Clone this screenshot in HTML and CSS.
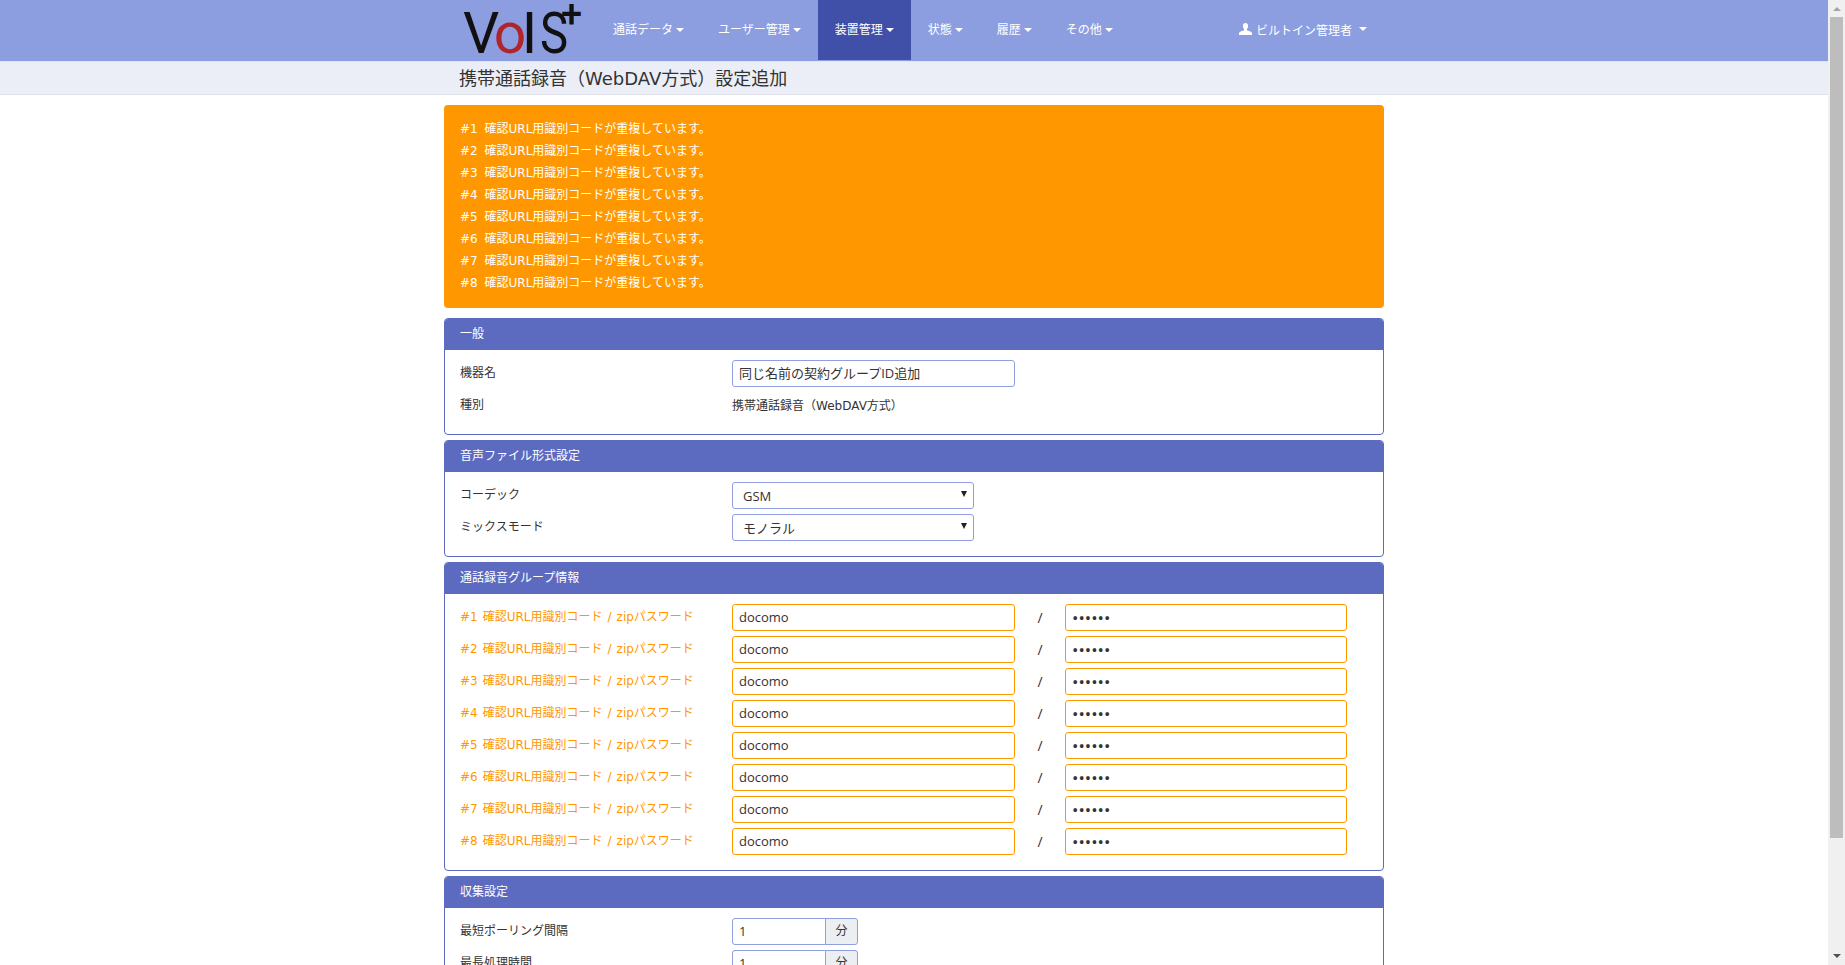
FILE: index.html
```html
<!DOCTYPE html>
<html lang="ja">
<head>
    <meta charset="UTF-8">
    <title>携帯通話録音（WebDAV方式）設定追加</title>
    <link rel="stylesheet" href="styles.css">
</head>
<body>
    <div class="page">
        <nav class="navbar">
            <div class="container nav-inner">
                <a class="logo" href="#"><span class="logo-v">V</span><span class="logo-o">o</span><span class="logo-i">I</span><span class="logo-s">S</span><span class="logo-plus">+</span></a>
                <ul class="nav-menu">
                    <li><a href="#">通話データ<i class="caret"></i></a></li>
                    <li><a href="#">ユーザー管理<i class="caret"></i></a></li>
                    <li class="active"><a href="#">装置管理<i class="caret"></i></a></li>
                    <li><a href="#">状態<i class="caret"></i></a></li>
                    <li><a href="#">履歴<i class="caret"></i></a></li>
                    <li><a href="#">その他<i class="caret"></i></a></li>
                </ul>
                <a class="nav-user" href="#">
                    <svg class="user-icon" viewBox="0 0 13 12"><path d="M6.500 0C4.900 0 3.900 1.200 3.900 3c0 1.200.5 2.300 1.200 3v1.200C3.500 7.800.6 8.500 0 10v2h13v-2c-.6-1.500-3.500-2.200-5.100-2.800V6c.7-.7 1.200-1.800 1.200-3C9.100 1.200 8.100 0 6.500 0z"/></svg>
                    <span>ビルトイン管理者</span><i class="caret caret-user"></i>
                </a>
            </div>
        </nav>
        <div class="subheader">
            <h1 class="container page-title">携帯通話録音（WebDAV方式）設定追加</h1>
        </div>

        <main class="container content">
            <div class="alert">
                <p>#1 確認URL用識別コードが重複しています。</p>
                <p>#2 確認URL用識別コードが重複しています。</p>
                <p>#3 確認URL用識別コードが重複しています。</p>
                <p>#4 確認URL用識別コードが重複しています。</p>
                <p>#5 確認URL用識別コードが重複しています。</p>
                <p>#6 確認URL用識別コードが重複しています。</p>
                <p>#7 確認URL用識別コードが重複しています。</p>
                <p>#8 確認URL用識別コードが重複しています。</p>
            </div>

            <section class="panel">
                <h2 class="panel-heading">一般</h2>
                <div class="panel-body">
                    <div class="form-row">
                        <label>機器名</label>
                        <input class="input input-code" type="text" value="同じ名前の契約グループID追加">
                    </div>
                    <div class="form-row">
                        <label>種別</label>
                        <span class="static-text">携帯通話録音（WebDAV方式）</span>
                    </div>
                </div>
            </section>

            <section class="panel">
                <h2 class="panel-heading">音声ファイル形式設定</h2>
                <div class="panel-body">
                    <div class="form-row">
                        <label>コーデック</label>
                        <div class="select"><span>GSM</span><i class="select-arrow"></i></div>
                    </div>
                    <div class="form-row">
                        <label>ミックスモード</label>
                        <div class="select"><span>モノラル</span><i class="select-arrow"></i></div>
                    </div>
                </div>
            </section>

            <section class="panel">
                <h2 class="panel-heading">通話録音グループ情報</h2>
                <div class="panel-body">
                    <div class="form-row error">
                        <label>#1 確認URL用識別コード / zipパスワード</label>
                        <input class="input input-code" type="text" value="docomo">
                        <span class="slash">/</span>
                        <input class="input input-pass" type="password" value="secret">
                    </div>
                    <div class="form-row error">
                        <label>#2 確認URL用識別コード / zipパスワード</label>
                        <input class="input input-code" type="text" value="docomo">
                        <span class="slash">/</span>
                        <input class="input input-pass" type="password" value="secret">
                    </div>
                    <div class="form-row error">
                        <label>#3 確認URL用識別コード / zipパスワード</label>
                        <input class="input input-code" type="text" value="docomo">
                        <span class="slash">/</span>
                        <input class="input input-pass" type="password" value="secret">
                    </div>
                    <div class="form-row error">
                        <label>#4 確認URL用識別コード / zipパスワード</label>
                        <input class="input input-code" type="text" value="docomo">
                        <span class="slash">/</span>
                        <input class="input input-pass" type="password" value="secret">
                    </div>
                    <div class="form-row error">
                        <label>#5 確認URL用識別コード / zipパスワード</label>
                        <input class="input input-code" type="text" value="docomo">
                        <span class="slash">/</span>
                        <input class="input input-pass" type="password" value="secret">
                    </div>
                    <div class="form-row error">
                        <label>#6 確認URL用識別コード / zipパスワード</label>
                        <input class="input input-code" type="text" value="docomo">
                        <span class="slash">/</span>
                        <input class="input input-pass" type="password" value="secret">
                    </div>
                    <div class="form-row error">
                        <label>#7 確認URL用識別コード / zipパスワード</label>
                        <input class="input input-code" type="text" value="docomo">
                        <span class="slash">/</span>
                        <input class="input input-pass" type="password" value="secret">
                    </div>
                    <div class="form-row error">
                        <label>#8 確認URL用識別コード / zipパスワード</label>
                        <input class="input input-code" type="text" value="docomo">
                        <span class="slash">/</span>
                        <input class="input input-pass" type="password" value="secret">
                    </div>
                </div>
            </section>

            <section class="panel">
                <h2 class="panel-heading">収集設定</h2>
                <div class="panel-body">
                    <div class="form-row">
                        <label>最短ポーリング間隔</label>
                        <div class="input-group"><input class="input" type="text" value="1"><span class="addon">分</span></div>
                    </div>
                    <div class="form-row">
                        <label>最長処理時間</label>
                        <div class="input-group"><input class="input" type="text" value="1"><span class="addon">分</span></div>
                    </div>
                </div>
            </section>
        </main>
    </div>

    <div class="scrollbar">
        <i class="scroll-up"></i>
        <div class="scroll-track"><div class="scroll-thumb"></div></div>
        <i class="scroll-down"></i>
    </div>
</body>
</html>
```

FILE: styles.css
```css
html, body {
    height: 965px;
    margin: 0;
    overflow: hidden;
}
body {
    display: flex;
    font-family: "DejaVu Sans", "Noto Sans CJK JP", sans-serif;
    font-size: 12px;
    color: #333;
    background-color: #fff;
}
.page {
    flex: 1;
    min-width: 0;
    height: 965px;
    overflow: hidden;
}
.container {
    width: 940px;
    margin: 0 auto;
}

/* ナビゲーション */
.navbar {
    height: 61px;
    background-color: #8c9ee0;
    border-bottom: 1px solid #dfe3f2;
}
.nav-inner {
    display: flex;
    height: 60px;
}
.logo {
    width: 152px;
    height: 60px;
    padding-left: 19px;
    box-sizing: border-box;
    position: relative;
    font-family: Roboto, sans-serif;
    font-size: 57px;
    line-height: 67px;
    color: #111;
    text-decoration: none;
    white-space: nowrap;
}
.logo-v {
    letter-spacing: -5.5px;
}
.logo-o {
    color: #b0242b;
    letter-spacing: -4.5px;
}
.logo-i {
    letter-spacing: 3px;
}
.logo-s {
    display: inline-block;
    transform: scaleX(.83);
    transform-origin: left;
}
.logo-plus {
    position: absolute;
    left: 117px;
    top: -5px;
    font-size: 38px;
    font-weight: 500;
    line-height: 38px;
}
.nav-menu {
    list-style: none;
    display: flex;
    margin: 0;
    padding: 0;
}
.nav-menu a {
    display: block;
    height: 60px;
    padding: 0 17px;
    line-height: 61px;
    color: #fff;
    text-decoration: none;
    white-space: nowrap;
}
.nav-menu .active a {
    background-color: #4050a8;
}
.caret {
    display: inline-block;
    margin-left: 3px;
    vertical-align: 2px;
    border-top: 4px solid #fff;
    border-left: 4px solid transparent;
    border-right: 4px solid transparent;
}
.nav-user {
    display: flex;
    align-items: center;
    gap: 4px;
    height: 58px;
    margin-left: auto;
    margin-right: 17px;
    color: #fff;
    text-decoration: none;
    white-space: nowrap;
}
.user-icon {
    width: 13px;
    height: 12px;
    fill: #fff;
}
.caret-user {
    margin-left: 3px;
    vertical-align: 0;
}

/* ページタイトル */
.subheader {
    height: 32px;
    background-color: #ebeef7;
    border-bottom: 1px solid #dfe0e8;
}
.page-title {
    margin: 0 auto;
    padding-left: 15px;
    box-sizing: border-box;
    font-size: 18px;
    font-weight: 400;
    line-height: 34px;
    color: #333;
}

.content {
    padding-top: 10px;
}

/* エラーメッセージ */
.alert {
    height: 203px;
    margin-bottom: 10px;
    padding: 13px 16px 0;
    box-sizing: border-box;
    background-color: #ff9800;
    border-radius: 4px;
    color: #fff;
    word-spacing: 3px;
}
.alert p {
    margin: 0;
    line-height: 22px;
}

/* パネル */
.panel {
    margin-bottom: 5px;
    border: 1px solid #5c6bc0;
    border-radius: 4px;
    overflow: hidden;
}
.panel-heading {
    margin: 0;
    padding-left: 15px;
    background-color: #5c6bc0;
    color: #fff;
    font-size: 12px;
    font-weight: 400;
    line-height: 30px;
    height: 31px;
}
.panel-body {
    padding: 10px 15px 15px;
}
.form-row {
    display: flex;
    align-items: center;
    height: 27px;
    margin-bottom: 5px;
}
.form-row:last-child {
    margin-bottom: 0;
}
.form-row label {
    width: 272px;
    flex-shrink: 0;
    margin-top: -4px;
}
.static-text {
    margin-top: -3px;
}
.input {
    height: 27px;
    box-sizing: border-box;
    padding: 0 6px 2px;
    border: 1px solid #8f9fe0;
    border-radius: 3px;
    font-family: "Open Sans", "Noto Sans CJK JP", sans-serif;
    font-size: 13px;
    color: #333;
    background-color: #fff;
}
.input-code {
    width: 283px;
}
.input-pass {
    width: 282px;
    padding: 0 6px;
    font-size: 17px;
}
.select {
    display: flex;
    align-items: center;
    justify-content: space-between;
    width: 242px;
    height: 27px;
    box-sizing: border-box;
    padding: 0 6px 0 10px;
    border: 1px solid #8f9fe0;
    border-radius: 3px;
    font-family: "Open Sans", "Noto Sans CJK JP", sans-serif;
    font-size: 13px;
}
.select-arrow {
    margin-top: -4px;
    border-top: 6px solid #222;
    border-left: 3px solid transparent;
    border-right: 3px solid transparent;
}
.error label {
    color: #ff9800;
    word-spacing: 1.2px;
}
.error .input {
    border-color: #ff9800;
}
.slash {
    width: 50px;
    text-align: center;
    font-family: "Open Sans", sans-serif;
    font-size: 14px;
}
.input-group {
    display: flex;
}
.input-group .input {
    width: 94px;
    border-radius: 3px 0 0 3px;
}
.addon {
    width: 33px;
    height: 27px;
    box-sizing: border-box;
    margin-left: -1px;
    border: 1px solid #8f9fe0;
    border-radius: 0 3px 3px 0;
    background-color: #eceff1;
    text-align: center;
    line-height: 25px;
}

/* スクロールバー */
.scrollbar {
    display: flex;
    flex-direction: column;
    align-items: center;
    width: 17px;
    height: 965px;
    background-color: #f0f0f0;
}
.scroll-up, .scroll-down {
    width: 0;
    height: 0;
    border-left: 4px solid transparent;
    border-right: 4px solid transparent;
}
.scroll-up {
    margin: 7px 0 6px;
    border-bottom: 4px solid #a3a3a3;
}
.scroll-down {
    margin: 6px 0 7px;
    border-top: 4px solid #505050;
}
.scroll-track {
    flex: 1;
    width: 100%;
    padding: 0 2px;
    box-sizing: border-box;
}
.scroll-thumb {
    height: 821px;
    background-color: #bdbdbd;
}
```
